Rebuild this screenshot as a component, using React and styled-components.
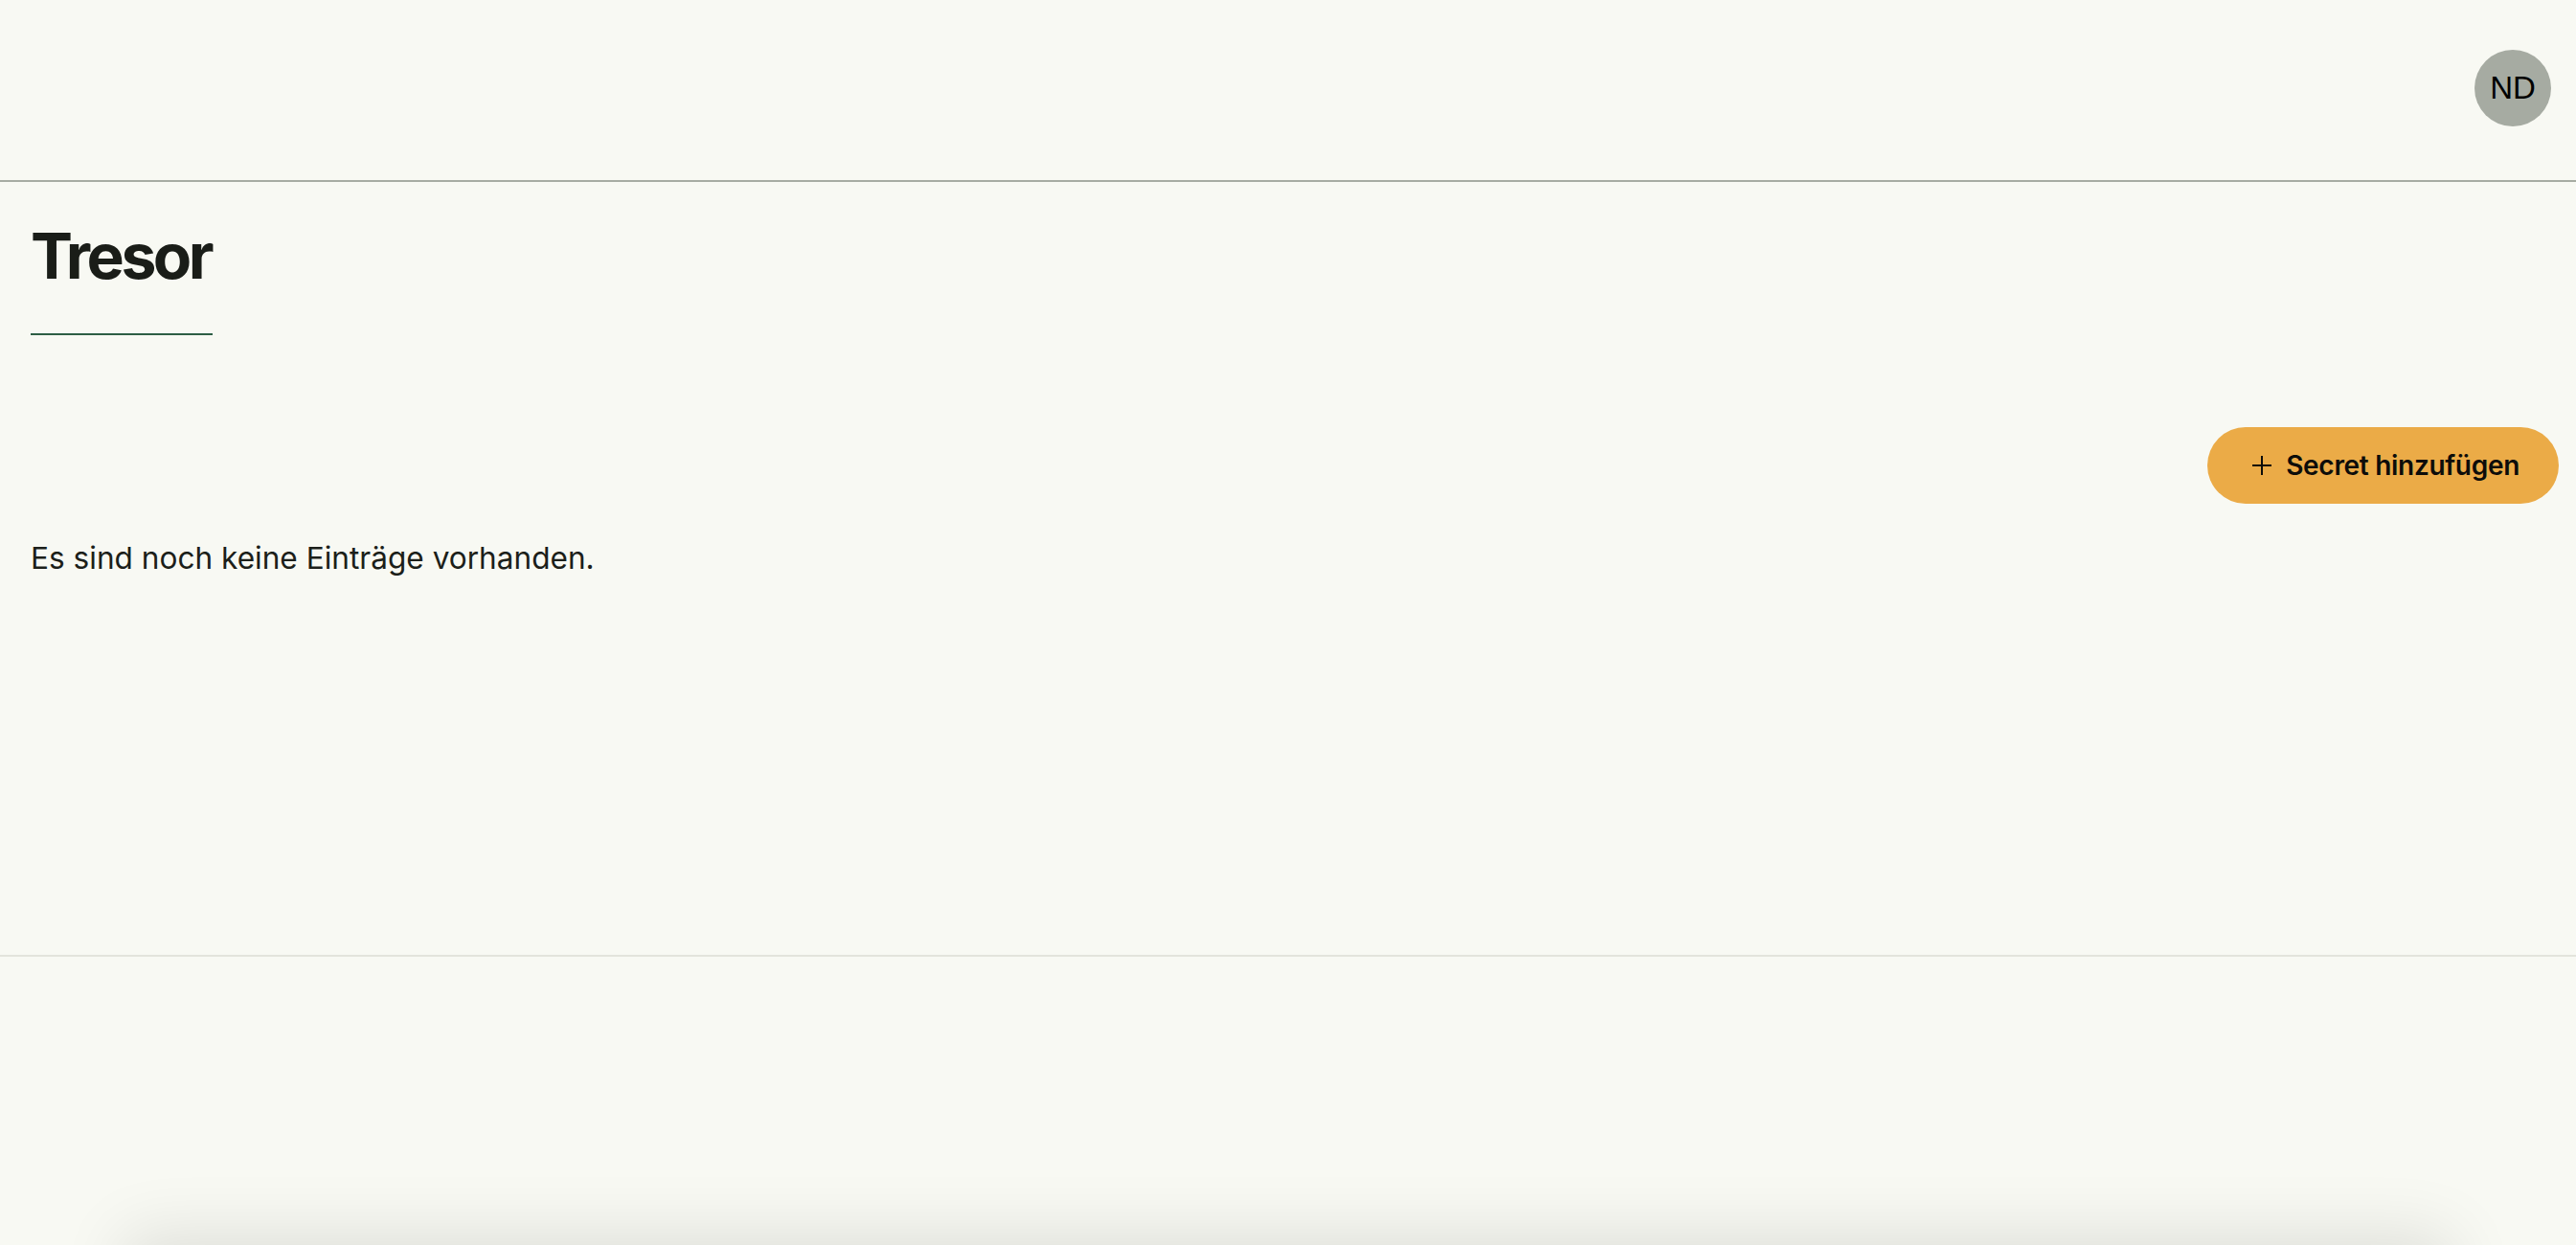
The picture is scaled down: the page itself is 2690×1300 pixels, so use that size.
import React from "react";
import styled, { createGlobalStyle } from "styled-components";

const GlobalStyle = createGlobalStyle`
  html, body {
    margin: 0;
    padding: 0;
    background: #f8f9f3;
    font-family: Inter, "Noto Sans", sans-serif;
    color: #1b1e19;
  }
`;

const Page = styled.div`
  min-height: 1500px;
  display: flex;
  flex-direction: column;
`;

const Header = styled.header`
  height: 190px;
  box-sizing: border-box;
  display: flex;
  justify-content: flex-end;
  align-items: flex-start;
  padding: 52px 26px 0;
  border-bottom: 2px solid #a7aca3;
`;

const Avatar = styled.div`
  width: 80px;
  height: 80px;
  border-radius: 50%;
  background: #a6aba2;
  display: flex;
  align-items: center;
  justify-content: center;
  font-family: "Liberation Sans", Arial, sans-serif;
  font-size: 33px;
  color: #000;
`;

const Main = styled.main`
  height: 809px;
  box-sizing: border-box;
  padding: 37px 18px 0 32px;
  border-bottom: 2px solid #e3e4dc;
`;

const TitleBlock = styled.div`
  width: 190px;
  padding-bottom: 41px;
  border-bottom: 2px solid #2d5e44;
`;

const Title = styled.h1`
  margin: 0;
  font-size: 66px;
  font-weight: 700;
  letter-spacing: -3.5px;
  line-height: normal;
  color: #1a1d18;
`;

const Actions = styled.div`
  display: flex;
  justify-content: flex-end;
  margin-top: 96px;
`;

const AddButton = styled.button`
  height: 80px;
  border: none;
  border-radius: 40px;
  background: #ebab47;
  display: flex;
  align-items: center;
  gap: 14px;
  padding: 0 41px 0 46px;
  font-family: Inter, sans-serif;
  font-size: 28px;
  font-weight: 600;
  letter-spacing: -0.3px;
  color: #0d0d0a;
  cursor: pointer;
`;

const Empty = styled.p`
  margin: 37px 0 0;
  font-size: 31.6px;
  line-height: normal;
  color: #1c1f1a;
`;

const Footer = styled.footer`
  flex: 1;
  display: flex;
  flex-direction: column;
  padding: 0 130px;
`;

const Sheet = styled.div`
  margin-top: 301px;
  height: 200px;
  background: #f8f9f3;
  box-shadow: 0 -10px 70px rgba(0, 0, 0, 0.11);
`;

function PlusIcon() {
  return (
    <svg width="22" height="22" viewBox="0 0 22 22" fill="none">
      <path d="M11 1v20M1 11h20" stroke="#0d0d0a" strokeWidth="2" />
    </svg>
  );
}

export default function App() {
  return (
    <>
      <GlobalStyle />
      <Page>
        <Header>
          <Avatar>ND</Avatar>
        </Header>
        <Main>
          <TitleBlock>
            <Title>Tresor</Title>
          </TitleBlock>
          <Actions>
            <AddButton>
              <PlusIcon />
              Secret hinzufügen
            </AddButton>
          </Actions>
          <Empty>Es sind noch keine Einträge vorhanden.</Empty>
        </Main>
        <Footer>
          <Sheet />
        </Footer>
      </Page>
    </>
  );
}
